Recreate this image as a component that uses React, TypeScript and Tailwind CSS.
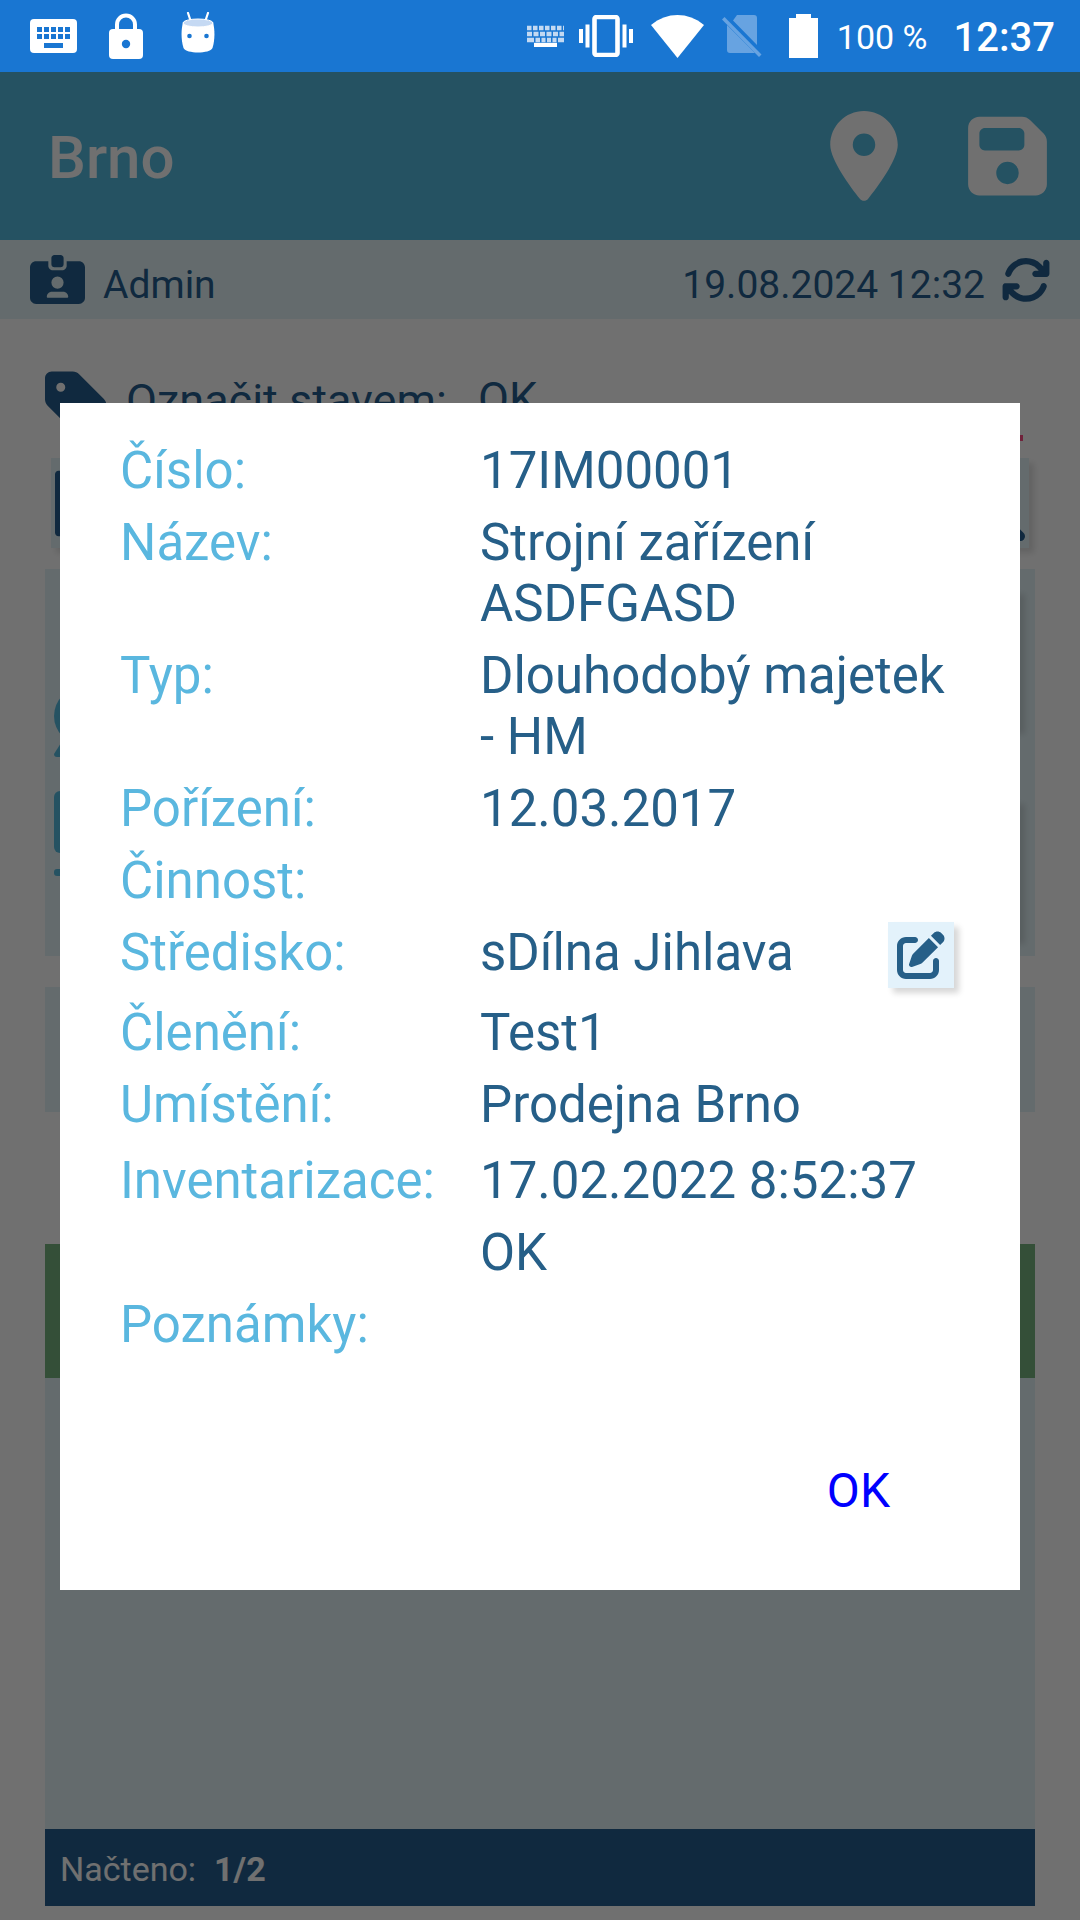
import React from 'react';
import {
  FaArrowsRotate,
  FaBarcode,
  FaFloppyDisk,
  FaIdCardClip,
  FaLocationDot,
  FaMagnifyingGlass,
  FaPenToSquare,
  FaTag,
} from 'react-icons/fa6';

type Detail = {
  label: string;
  value: string;
  editable?: boolean;
};

const details: Detail[] = [
  { label: 'Číslo:', value: '17IM00001' },
  { label: 'Název:', value: 'Strojní zařízení ASDFGASD' },
  { label: 'Typ:', value: 'Dlouhodobý majetek - HM' },
  { label: 'Pořízení:', value: '12.03.2017' },
  { label: 'Činnost:', value: '' },
  { label: 'Středisko:', value: 'sDílna Jihlava', editable: true },
  { label: 'Členění:', value: 'Test1' },
  { label: 'Umístění:', value: 'Prodejna Brno' },
];

const keyColumns = [7, 14, 21, 28, 35];

const StatusBar: React.FC = () => (
  <div className="flex h-[72px] shrink-0 items-center justify-between bg-[#1976d2] pl-[30px] pr-[25px] text-white">
    <div className="flex items-center">
      {/* Keyboard */}
      <svg className="mr-8 h-[34px] w-[47px]" viewBox="0 0 47 34">
        <rect width="47" height="34" rx="4" fill="#fff" />
        {keyColumns.map((x) => (
          <g key={x} fill="#1976d2">
            <rect x={x} y="8" width="5" height="5" />
            <rect x={x} y="15" width="5" height="5" />
          </g>
        ))}
        <rect x="14" y="24" width="19" height="5" fill="#1976d2" />
      </svg>
      {/* Lock */}
      <svg className="mr-[38px] h-[46px] w-[34px]" viewBox="0 0 34 46">
        <path d="M8 18V11.5a9 9 0 0 1 18 0V18" fill="none" stroke="#fff" strokeWidth="4" />
        <rect y="16" width="34" height="30" rx="4" fill="#fff" />
        <circle cx="17" cy="31" r="4.2" fill="#1976d2" />
      </svg>
      {/* Android head */}
      <svg className="mb-2 h-[41px] w-[34px]" viewBox="0 0 34 41">
        <path d="M7 1l3 9M27 1l-3 9" stroke="#fff" strokeWidth="2.2" strokeLinecap="round" />
        <path d="M2 10C0 18 0 28 2.500 36C5 42 29 42 31.500 36C34 28 34 18 32 10Z" fill="#fff" />
        <ellipse cx="17" cy="11" rx="15" ry="4" fill="#c5d9f3" stroke="#fff" />
        <circle cx="8.500" cy="24" r="2.300" fill="#1976d2" />
        <circle cx="25.500" cy="24" r="2.300" fill="#1976d2" />
      </svg>
    </div>

    <div className="flex items-center">
      {/* Input method */}
      <svg className="mr-[14px] h-[22px] w-[39px]" viewBox="0 0 39 22" stroke="#c3d9f2" strokeWidth="4.400">
        <path d="M1 3H38" strokeDasharray="4.500 1.500" />
        <path d="M1 9H38" strokeDasharray="5 1.500" />
        <path d="M1 15H8M9.500 15H14M15.500 15H19.500M21 15H25M26.500 15H30.500M32 15H38" />
        <path d="M8 20H31" stroke="#fff" />
      </svg>
      {/* Vibrate */}
      <svg className="mr-[18px] h-[42px] w-[54px]" viewBox="0 0 54 42">
        <rect x="15.500" y="2" width="23" height="38" rx="2" fill="none" stroke="#fff" strokeWidth="4.600" />
        <path d="M0 14h4v14H0zM6.500 9.500h4v23h-4zM43.500 9.500h4v23h-4zM50 14h4v14h-4z" fill="#fff" />
      </svg>
      {/* Wi-Fi */}
      <svg className="mr-[18px] h-[43px] w-[53px]" viewBox="0 0 53 43">
        <path d="M0 10C16-3.300 37-3.300 53 10L26.500 43Z" fill="#fff" />
      </svg>
      {/* No SIM */}
      <svg className="mr-[27px] h-[42px] w-[40px]" viewBox="0 0 40 42" fill="#67a3e1">
        <path d="M15 0H32a3 3 0 0 1 3 3V30L11 5.500ZM5 10L33 38H8a3 3 0 0 1-3-3Z" />
        <path d="M2.500 2L0 4.500L37 42l2.500-2.500Z" />
      </svg>
      {/* Battery */}
      <svg className="mr-[19px] h-[44px] w-[29px]" viewBox="0 0 29 44">
        <path d="M7 0H22V4H29V44H0V4H7Z" fill="#fff" />
      </svg>
      <span className="mr-[26px] pt-0.5 text-[34px] leading-[40px]">100 %</span>
      <span className="pt-1 text-[40px] font-medium leading-[48px]">12:37</span>
    </div>
  </div>
);

const InventoryScreen: React.FC = () => (
  <div className="flex flex-1 flex-col">
    {/* Header */}
    <header className="flex h-[168px] items-center justify-between bg-[#56bbe0] pl-12 pr-[33px] text-white">
      <h1 className="pt-1 text-[60px] font-medium leading-[70px]">Brno</h1>
      <div className="flex items-center gap-[70px]">
        <button type="button" aria-label="Umístění">
          <FaLocationDot className="h-[90px] w-[68px]" />
        </button>
        <button type="button" aria-label="Uložit">
          <FaFloppyDisk className="h-[90px] w-[79px]" />
        </button>
      </div>
    </header>

    {/* User and last sync */}
    <div className="flex h-[79px] items-center justify-between bg-[#e4f4f8] pl-[30px] pr-[29px] text-[39px] leading-[48px] text-[#265f8f]">
      <div className="flex items-center gap-[18px]">
        <FaIdCardClip className="h-[49px] w-[55px]" />
        <span className="pt-2.5">Admin</span>
      </div>
      <div className="flex items-center gap-4">
        <span className="pt-2.5">19.08.2024 12:32</span>
        <button type="button" aria-label="Synchronizovat">
          <FaArrowsRotate className="h-[50px] w-[50px]" />
        </button>
      </div>
    </div>

    <div className="flex flex-1 flex-col px-[45px] pb-[14px] pt-12 text-[#265f8f]">
      {/* State */}
      <div className="flex h-[74px] items-start text-[45px] leading-[52px]">
        <FaTag className="mr-[18px] h-[72px] w-[63px]" />
        <label htmlFor="state" className="w-[352px] pt-2">
          Označit stavem:
        </label>
        <select
          id="state"
          className="mr-3 h-[74px] flex-1 appearance-none border-b-[6px] border-[#ff4f86] bg-transparent pb-1"
        >
          <option>OK</option>
        </select>
      </div>

      {/* Search */}
      <div className="mx-[6px] mt-[17px] flex h-[90px] items-center justify-between">
        <button type="button" aria-label="Skenovat" className="h-[90px] bg-[#e4f4f8] px-1 shadow-[5px_5px_6px_rgba(0,0,0,0.12)]">
          <FaBarcode className="h-[75px] w-[75px]" />
        </button>
        <input aria-label="Hledat" className="h-[90px] min-w-0 flex-1" />
        <button type="button" aria-label="Vyhledat" className="h-[90px] bg-[#e4f4f8] px-1 shadow-[5px_5px_6px_rgba(0,0,0,0.12)]">
          <FaMagnifyingGlass className="h-[75px] w-[75px]" />
        </button>
      </div>

      {/* Selected item */}
      <div className="mt-[21px] flex h-[387px] items-start justify-between bg-[#e4f4f8] pl-[9px] pr-[15px] pt-5 text-[#56bbe0]">
        <svg className="mt-[110px] h-[180px] w-[60px] overflow-visible" viewBox="0 0 60 180" fill="currentColor">
          <circle cx="29" cy="17" r="29" />
          <path d="M0 55L12 36L30 58H3Q0 58 0 55Z" />
          <rect y="92" width="60" height="62" rx="6" />
          <rect y="170" width="20" height="7" rx="3" />
        </svg>
        <div className="flex flex-col gap-[70px]">
          <div className="h-[140px] w-[80px] bg-[#e4f4f8] shadow-[5px_5px_6px_rgba(0,0,0,0.12)]" />
          <div className="h-[140px] w-[80px] bg-[#e4f4f8] shadow-[5px_5px_6px_rgba(0,0,0,0.12)]" />
        </div>
      </div>

      <div className="mt-[31px] h-[125px] bg-[#e4f4f8]" />

      {/* Loaded items */}
      <div className="mt-[132px] flex flex-1 flex-col bg-[#e4f4f8]">
        <div className="h-[134px] bg-[#78b380]" />
      </div>
      <footer className="flex h-[77px] items-center gap-[18px] bg-[#265f8f] px-[15px] pt-0.5 text-[34px] leading-[40px] text-white">
        <span>Načteno:</span>
        <b className="font-bold">1/2</b>
      </footer>
    </div>
  </div>
);

const DetailDialog: React.FC = () => (
  <div className="absolute inset-0 flex items-center bg-black/56 px-[60px]">
    <div role="dialog" aria-label="Detail majetku" className="w-full bg-white px-[60px] pb-[71px] pt-[37px]">
      <dl className="flex flex-col gap-[11px] text-[51px] leading-[61px] text-[#265f88]">
        {details.map(({ label, value, editable }) => (
          <div key={label} className="grid grid-cols-[3fr_4fr]">
            <dt className="text-[#5ab7df]">{label}</dt>
            <dd className={editable ? 'flex h-[69px] items-start justify-between pr-[6px]' : ''}>
              {value}
              {editable && (
                <button
                  type="button"
                  aria-label="Upravit středisko"
                  className="flex h-[66px] w-[66px] items-center justify-center bg-[#e3f2fb] shadow-[5px_5px_6px_rgba(0,0,0,0.16)]"
                >
                  <FaPenToSquare className="h-12 w-12" />
                </button>
              )}
            </dd>
          </div>
        ))}
        <div className="grid grid-cols-[3fr_4fr] pt-1">
          <dt className="text-[#5ab7df]">Inventarizace:</dt>
          <dd className="flex flex-col gap-[11px]">
            <span>17.02.2022 8:52:37</span>
            <span>OK</span>
          </dd>
        </div>
        <div className="grid grid-cols-[3fr_4fr]">
          <dt className="text-[#5ab7df]">Poznámky:</dt>
          <dd />
        </div>
      </dl>

      <div className="mt-[108px] flex justify-end pr-[70px]">
        <button type="button" className="text-[48px] leading-[56px] text-[#0000ff]">
          OK
        </button>
      </div>
    </div>
  </div>
);

const App: React.FC = () => {
  return (
    <div className="flex min-h-screen flex-col bg-white font-['Roboto',sans-serif]">
      <StatusBar />
      <main className="relative flex flex-1 flex-col">
        <InventoryScreen />
        <DetailDialog />
      </main>
    </div>
  );
};

export default App;
